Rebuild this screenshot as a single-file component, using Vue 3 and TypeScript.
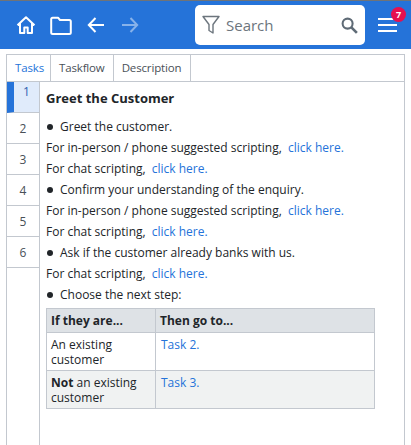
<script setup lang="ts">
const steps = [1, 2, 3, 4, 5, 6]
const tabs = ['Tasks', 'Taskflow', 'Description']
</script>

<template>
  <div class="page">
    <header class="bar">
      <div class="nav">
        <svg class="ic home" viewBox="0 0 20 20" fill="none" stroke="#fff" stroke-width="2">
          <path d="M1.5 10.2 10 2.2l8.500 8M4 8.500V18h4.300v-5.500h3.400V18H16V8.500" stroke-linejoin="round" />
        </svg>
        <svg class="ic folder" viewBox="0 0 22 19" fill="none" stroke="#fff" stroke-width="2">
          <path d="M1.200 16.500V3.200q0-1.500 1.500-1.500h5.300l2 2.300h9.300q1.500 0 1.500 1.500v11q0 1.500-1.500 1.500H2.700q-1.500 0-1.500-1.500Z" stroke-linejoin="round" />
        </svg>
        <svg class="ic arrow" viewBox="0 0 18 16" fill="none" stroke="#fff" stroke-width="2">
          <path d="M17 8H2M8.500 1 1.800 8l6.700 7" />
        </svg>
        <svg class="ic arrow dim" viewBox="0 0 18 16" fill="none" stroke="#fff" stroke-width="2">
          <path d="M1 8h15M9.500 1l6.700 7-6.700 7" />
        </svg>
      </div>
      <div class="search">
        <svg class="filter" viewBox="0 0 18 20" fill="none" stroke="#6c757d" stroke-width="1.400">
          <path d="M1 1.500h16L11 9.500v8.500l-4-2.500V9.500Z" stroke-linejoin="round" />
        </svg>
        <span class="placeholder">Search</span>
        <svg class="glass" viewBox="0 0 18 18" fill="none" stroke="#5f6b76" stroke-width="2.200">
          <circle cx="7" cy="7" r="5.300" />
          <path d="m11 11 5.800 5.800" stroke-width="2.800" />
        </svg>
      </div>
      <div class="menu">
        <span class="line"></span><span class="line"></span><span class="line"></span>
        <span class="badge">7</span>
      </div>
    </header>

    <main class="panel">
      <nav class="tabs">
        <span v-for="(t, i) in tabs" :key="t" class="tab" :class="{ active: i === 0 }">{{ t }}</span>
      </nav>
      <div class="body">
        <aside class="steps">
          <div v-for="s in steps" :key="s" class="step" :class="{ current: s === 1 }">{{ s }}</div>
        </aside>
        <article class="content">
          <h1>Greet the Customer</h1>
          <p class="item"><i></i>Greet the customer.</p>
          <p>For in-person / phone suggested scripting, <a>click here.</a></p>
          <p>For chat scripting, <a>click here.</a></p>
          <p class="item"><i></i>Confirm your understanding of the enquiry.</p>
          <p>For in-person / phone suggested scripting, <a>click here.</a></p>
          <p>For chat scripting, <a>click here.</a></p>
          <p class="item"><i></i>Ask if the customer already banks with us.</p>
          <p>For chat scripting, <a>click here.</a></p>
          <p class="item"><i></i>Choose the next step:</p>
          <table>
            <thead>
              <tr><th class="c1">If they are...</th><th>Then go to...</th></tr>
            </thead>
            <tbody>
              <tr><td class="c1">An existing customer</td><td><a>Task 2.</a></td></tr>
              <tr class="alt"><td class="c1"><b>Not</b> an existing customer</td><td><a>Task 3.</a></td></tr>
            </tbody>
          </table>
        </article>
      </div>
    </main>
  </div>
</template>

<style>
html, body { margin: 0; background: #fff; }
</style>

<style scoped>
.page {
  width: 411px;
  height: 445px;
  box-sizing: border-box;
  overflow: hidden;
  font-family: "Open Sans", "Noto Sans", sans-serif;
  font-size: 12px;
  color: #212529;
  background: #fff;
  border-top: 1px solid #6f7378;
  display: flex;
  flex-direction: column;
}
.bar {
  height: 48px;
  flex: none;
  background: #2573d9;
  display: flex;
  align-items: center;
  padding-left: 16px;
}
.nav { display: flex; align-items: center; }
.ic { display: block; }
.home { width: 20px; height: 20px; margin-right: 14px; }
.folder { width: 22px; height: 19px; margin-right: 15px; }
.arrow { width: 18px; height: 16px; margin-right: 16px; }
.dim { opacity: 0.45; margin-right: 0; }
.search {
  width: 170px;
  height: 40px;
  background: #fff;
  border-radius: 5px;
  display: flex;
  align-items: center;
  box-sizing: border-box;
  padding: 0 7px;
  margin-left: 56px;
}
.filter { width: 18px; height: 20px; flex: none; }
.placeholder { margin-left: 6px; font-size: 15px; color: #6c757d; flex: 1; }
.glass { width: 17px; height: 17px; flex: none; }
.menu {
  position: relative;
  margin-left: 13px;
  width: 19px;
  display: flex;
  flex-direction: column;
  gap: 4px;
}
.line { display: block; height: 2px; background: #fff; }
.badge {
  position: absolute;
  top: -11px;
  right: -9px;
  width: 15px;
  height: 15px;
  border-radius: 50%;
  background: #e6104f;
  color: #fff;
  font-size: 9px;
  font-weight: 700;
  line-height: 15px;
  text-align: center;
}
.panel {
  flex: 1;
  margin: 5px 6px 0;
  border: 1px solid #c3c8cf;
  border-bottom: 0;
  display: flex;
  flex-direction: column;
  min-height: 0;
}
.tabs {
  display: flex;
  height: 26px;
  flex: none;
  border-bottom: 1px solid #c3c8cf;
}
.tab {
  display: flex;
  align-items: center;
  padding: 0 8px 2px;
  border-right: 1px solid #c3c8cf;
  color: #495057;
  font-size: 11.5px;
  letter-spacing: -0.15px;
}
.tab.active { color: #2573d9; padding-right: 6px; }
.tab:last-child { padding: 0 9px 2px 8px; }
.body { flex: 1; display: flex; min-height: 0; }
.steps {
  width: 32px;
  flex: none;
  border-right: 1px solid #c3c8cf;
}
.step {
  height: 30px;
  border-bottom: 1px solid #c3c8cf;
  text-align: center;
  line-height: 32px;
  color: #495057;
}
.step.current {
  background: #e0ebfb;
  border-left: 7px solid #2573d9;
  line-height: 19px;
  color: #2f5fb0;
}
.content { flex: 1; padding: 5px 6px 0; min-width: 0; }
h1 { margin: 0 0 7px; font-size: 13px; font-weight: 700; line-height: 22px; }
p { margin: 0; height: 21px; line-height: 21px; white-space: nowrap; }
a { color: #2573d9; margin-left: 3px; }
td a { margin-left: 1px; }
.item i {
  display: inline-block;
  width: 6px;
  height: 6px;
  border-radius: 50%;
  background: #212529;
  margin: 0 7px 1px 1px;
}
table {
  margin-top: 3px;
  width: 329px;
  border-collapse: collapse;
  table-layout: fixed;
  line-height: 15px;
}
th, td {
  border: 1px solid #c3c8cf;
  padding: 4px 4px 3px;
  text-align: left;
  vertical-align: top;
}
th { background: #dee2e6; font-weight: 700; padding: 4px; }
.c1 { width: 100px; }
.alt td { background: #f0f2f2; }
</style>
